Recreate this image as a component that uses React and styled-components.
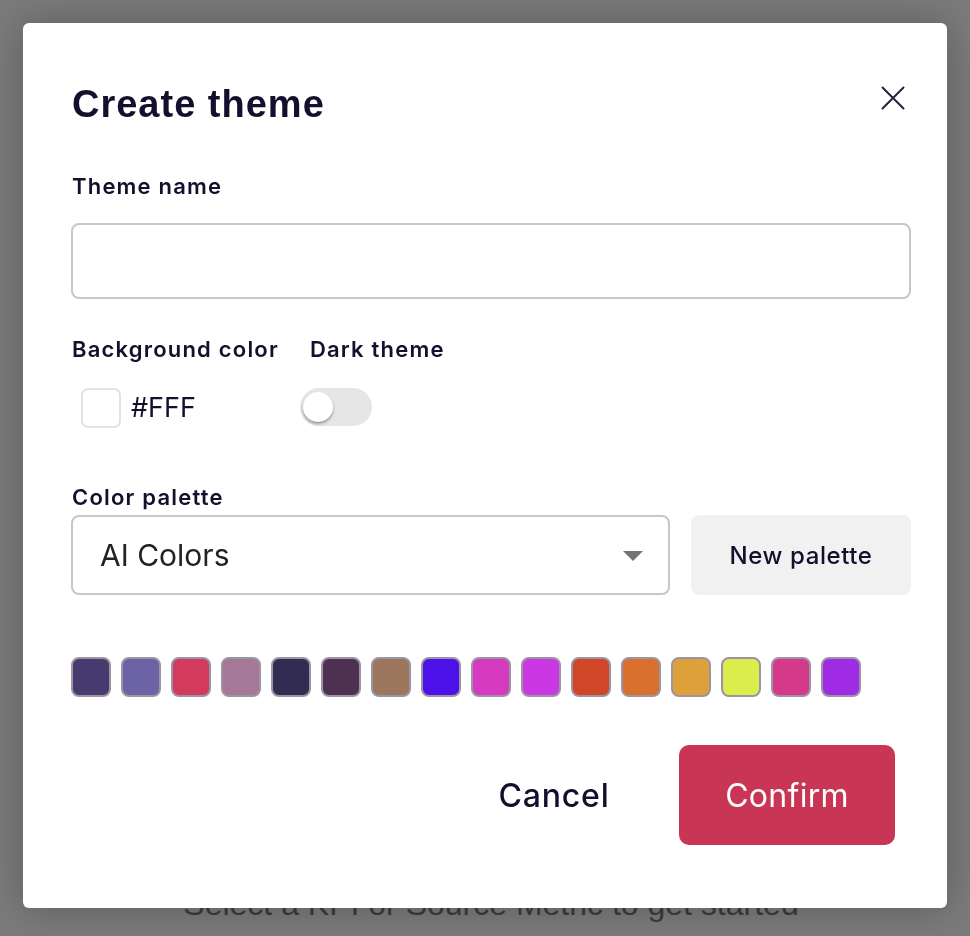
import React, { useState } from "react";
import styled, { createGlobalStyle } from "styled-components";

const SWATCHES = [
  "#463a6e",
  "#6c62a6",
  "#d33b5e",
  "#a67898",
  "#322b52",
  "#4e3150",
  "#9c775d",
  "#4b11e8",
  "#d63ac0",
  "#cc37e4",
  "#d04626",
  "#d9702e",
  "#dea038",
  "#dbec4d",
  "#d4398a",
  "#9f2be4",
];

const App = () => {
  const [dark, setDark] = useState(false);
  return (
    <>
      <GlobalStyle />
      <Page>
        <EmptyText>Select a KPI or Source Metric to get started</EmptyText>
      </Page>
      <Overlay>
        <Modal>
          <Header>
            <Title>Create theme</Title>
            <CloseButton aria-label="Close">
              <svg width="24" height="24" viewBox="0 0 24 24" fill="none">
                <path
                  d="M1.5 1.5L22.5 22.5M22.5 1.5L1.5 22.5"
                  stroke="#2a1f3d"
                  strokeWidth="2"
                  strokeLinecap="round"
                />
              </svg>
            </CloseButton>
          </Header>

          <Label htmlFor="theme-name">Theme name</Label>
          <TextInput id="theme-name" type="text" />

          <SettingsRow>
            <Setting>
              <Label>Background color</Label>
              <ColorValue>
                <ColorBox color="#fff" />
                <ColorText>#FFF</ColorText>
              </ColorValue>
            </Setting>
            <Setting>
              <Label $indent>Dark theme</Label>
              <Toggle $on={dark} onClick={() => setDark(!dark)}>
                <Knob $on={dark} />
              </Toggle>
            </Setting>
          </SettingsRow>

          <Label $tight>Color palette</Label>
          <PaletteRow>
            <Select>
              <span>AI Colors</span>
              <Caret />
            </Select>
            <GhostButton>New palette</GhostButton>
          </PaletteRow>

          <Swatches>
            {SWATCHES.map((c) => (
              <Swatch key={c} color={c} />
            ))}
          </Swatches>

          <Footer>
            <CancelButton>Cancel</CancelButton>
            <ConfirmButton>Confirm</ConfirmButton>
          </Footer>
        </Modal>
      </Overlay>
    </>
  );
};

const GlobalStyle = createGlobalStyle`
  html, body {
    margin: 0;
    padding: 0;
    background: #fff;
    font-family: Inter, "Liberation Sans", sans-serif;
  }
  button,
  input {
    appearance: none;
    font-family: inherit;
  }
`;

const Page = styled.div`
  height: 936px;
  display: flex;
  align-items: flex-end;
  justify-content: center;
  padding-bottom: 16px;
  box-sizing: border-box;
`;

const EmptyText = styled.p`
  margin: 0;
  font-family: "Liberation Sans", Arial, sans-serif;
  font-size: 32px;
  line-height: 32px;
  color: #7c7c7c;
  padding-left: 12px;
`;

const Overlay = styled.div`
  position: fixed;
  inset: 0;
  background: rgba(0, 0, 0, 0.52);
  display: flex;
  justify-content: center;
  align-items: flex-start;
  padding-top: 23px;
`;

const Modal = styled.div`
  width: 924px;
  height: 885px;
  box-sizing: border-box;
  background: #fff;
  border-radius: 6px;
  padding: 59px 36px 0 48px;
  box-shadow: 0 0 40px rgba(0, 0, 0, 0.25);
  display: flex;
  flex-direction: column;
  color: #150f2d;
`;

const Header = styled.div`
  display: flex;
  justify-content: space-between;
  align-items: flex-start;
  margin-bottom: 48px;
`;

const Title = styled.h2`
  margin: 0;
  font-family: "Liberation Sans", Arial, sans-serif;
  font-weight: bold;
  font-size: 38px;
  line-height: 44px;
  letter-spacing: 1px;
  padding-left: 1px;
  color: #150f2d;
`;

const CloseButton = styled.button`
  background: none;
  border: 0;
  padding: 0;
  margin: 4px 6px 0 0;
  width: 24px;
  height: 24px;
  display: flex;
  cursor: pointer;
`;

const Label = styled.label`
  display: block;
  font-size: 22px;
  line-height: 24px;
  font-weight: 600;
  letter-spacing: 1.2px;
  color: #150f2d;
  padding-left: ${(p) => (p.$indent ? "10px" : "1px")};
  margin-bottom: ${(p) => (p.$tight ? "6px" : "25px")};
`;

const TextInput = styled.input`
  display: block;
  height: 76px;
  box-sizing: border-box;
  border: 2px solid #c7c7c7;
  border-radius: 8px;
  padding: 0 26px;
  font-size: 26px;
  color: #150f2d;
  margin: 0 0 38px;
  outline: 0;
`;

const SettingsRow = styled.div`
  display: flex;
  gap: 21px;
  margin-bottom: 57px;
`;

const Setting = styled.div`
  display: flex;
  flex-direction: column;
  & > label {
    margin-bottom: 27px;
  }
`;

const ColorValue = styled.div`
  display: flex;
  align-items: center;
  gap: 10px;
  padding-left: 10px;
`;

const ColorBox = styled.span`
  width: 40px;
  height: 40px;
  box-sizing: border-box;
  border: 2px solid #e2e2e2;
  border-radius: 7px;
  background: ${(p) => p.color};
`;

const ColorText = styled.span`
  font-size: 27px;
  line-height: 40px;
  color: #150f2d;
`;

const Toggle = styled.button`
  position: relative;
  width: 72px;
  height: 38px;
  border: 0;
  padding: 0;
  border-radius: 19px;
  background: ${(p) => (p.$on ? "#c93655" : "#e6e6e6")};
  cursor: pointer;
`;

const Knob = styled.span`
  position: absolute;
  top: 4px;
  left: ${(p) => (p.$on ? "38px" : "3px")};
  width: 30px;
  height: 30px;
  border-radius: 50%;
  background: #fff;
  box-shadow: 0 2px 3px rgba(0, 0, 0, 0.35);
`;

const PaletteRow = styled.div`
  display: flex;
  gap: 21px;
  margin-bottom: 62px;
`;

const Select = styled.div`
  flex: 0 0 599px;
  height: 80px;
  box-sizing: border-box;
  border: 2px solid #c7c7c7;
  border-radius: 8px;
  display: flex;
  align-items: center;
  justify-content: space-between;
  padding: 0 25px 0 27px;
  font-size: 30px;
  color: #222;
`;

const Caret = styled.span`
  width: 0;
  height: 0;
  border-left: 10px solid transparent;
  border-right: 10px solid transparent;
  border-top: 10px solid #737373;
  margin-top: 2px;
`;

const GhostButton = styled.button`
  width: 220px;
  height: 80px;
  border: 0;
  border-radius: 8px;
  background: #f1f1f1;
  font-size: 24px;
  font-weight: 500;
  letter-spacing: 0.6px;
  color: #150f2d;
  cursor: pointer;
`;

const Swatches = styled.div`
  display: flex;
  gap: 10px;
  margin-bottom: 48px;
`;

const Swatch = styled.span`
  width: 40px;
  height: 40px;
  box-sizing: border-box;
  border: 2px solid #9b95a3;
  border-radius: 8px;
  background: ${(p) => p.color};
`;

const Footer = styled.div`
  display: flex;
  justify-content: flex-end;
  gap: 17px;
  padding-right: 16px;
`;

const BaseButton = styled.button`
  width: 216px;
  height: 100px;
  border: 0;
  border-radius: 10px;
  font-size: 32px;
  cursor: pointer;
`;

const CancelButton = styled(BaseButton)`
  background: transparent;
  color: #150f2d;
  font-weight: 500;
  letter-spacing: 0.8px;
`;

const ConfirmButton = styled(BaseButton)`
  background: #c93655;
  color: #fff;
  font-weight: 400;
  letter-spacing: 0.3px;
`;

export default App;
